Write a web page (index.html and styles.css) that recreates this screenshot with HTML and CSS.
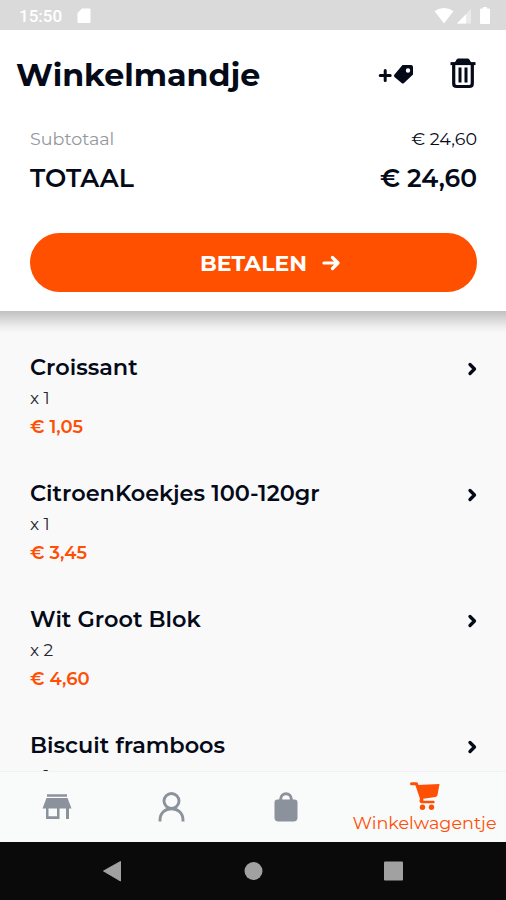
FILE: index.html
```html
<!DOCTYPE html>
<html lang="nl">
<head>
  <meta charset="UTF-8" />
  <meta name="viewport" content="width=device-width, initial-scale=1.0" />
  <title>Winkelmandje</title>
  <link rel="stylesheet" href="styles.css">
</head>
<body>
  <div class="status-bar">
    <span class="clock">15:50</span>
    <svg class="sd-card" width="14" height="16" viewBox="0 0 14 16"><path d="M5 0.5H12.5Q13.5 0.5 13.5 1.5V14Q13.5 15 12.5 15H1.5Q0.5 15 0.5 14V5Z" fill="#fff"/></svg>
    <div class="status-icons">
      <svg width="20" height="16" viewBox="0 0 20 16"><path d="M0.500 3Q10 -3 19.500 3L10 15.500Z" fill="#fff"/></svg>
      <svg width="14" height="16" viewBox="0 0 14 16"><path d="M14 1V15.500H0Z" fill="#ebebeb"/><path d="M9 6.200V15.500H0Z" fill="#fff"/></svg>
      <svg class="battery" width="10" height="17" viewBox="0 0 10 17"><path d="M3 0H7V1.500H9Q10 1.500 10 2.500V16Q10 17 9 17H1Q0 17 0 16V2.500Q0 1.500 1 1.500H3Z" fill="#fff"/></svg>
    </div>
  </div>

  <header class="summary">
    <div class="title-row">
      <h1>Winkelmandje</h1>
      <svg class="tag-icon" width="36" height="22" viewBox="0 0 36 22">
        <path d="M7.200 6.500V16.500M2.200 11.500H12.200" stroke="#050a19" stroke-width="3" stroke-linecap="round"/>
        <path d="M24.500 1H33Q35 1 35 3V10.500L26 19Q24.800 20.100 23.600 19L16.500 13Q15.300 11.800 16.500 10.600ZM30 4.300A2.200 2.200 0 1 0 30 8.700A2.200 2.200 0 1 0 30 4.300Z" fill="#050a19"/>
      </svg>
      <svg class="trash-icon" width="26" height="31" viewBox="0 0 26 31" fill="none" stroke="#050a19">
        <path d="M0.500 5.600H25.500" stroke-width="3"/>
        <path d="M5 5L7.500 1H18.500L21 5Z" fill="#050a19" stroke-width="1"/>
        <path d="M3.700 6V25.500Q3.700 28.500 6.700 28.500H19.300Q22.300 28.500 22.300 25.500V6" stroke-width="3.200"/>
        <path d="M10 9.500V24.500M16 9.500V24.500" stroke-width="3"/>
      </svg>
    </div>
    <div class="subtotal"><span class="muted">Subtotaal</span><span class="amount">€ 24,60</span></div>
    <div class="total"><span class="label">TOTAAL</span><span class="amount">€ 24,60</span></div>
    <button class="pay">
      <span>BETALEN</span>
      <svg width="18" height="16" viewBox="0 0 18 16" fill="none" stroke="#fff" stroke-width="3.200" stroke-linecap="round" stroke-linejoin="round"><path d="M2 8H16M10.500 2.500L16 8L10.500 13.500"/></svg>
    </button>
  </header>

  <main class="items" id="items"></main>

  <nav class="tabs">
    <a class="tab">
      <svg width="30" height="26" viewBox="0 0 30 26" fill="#8b929c"><path d="M5 0.300H25V2.800H5ZM4.500 4H25.500L29.500 14.500H27V25H24V14.500H17.500V25H4V14.500H0.500ZM6.500 14.500V22.300H15V14.500Z" fill-rule="evenodd"/></svg>
    </a>
    <a class="tab">
      <svg width="28" height="30" viewBox="0 0 28 30" fill="none" stroke="#8b929c" stroke-width="2.900"><circle cx="14.500" cy="9" r="7.500"/><path d="M3 29.500V28C3 21 8 16.700 14.500 16.700S26 21 26 28V29.500"/></svg>
    </a>
    <a class="tab">
      <svg width="24" height="30" viewBox="0 0 24 30"><path d="M6.700 9V7A5.300 5.300 0 0 1 17.300 7V9" fill="none" stroke="#8b929c" stroke-width="3"/><path d="M3.500 7.500H20.500Q23.500 7.500 23.500 10.500V25.500Q23.500 29.500 19.500 29.500H4.500Q0.500 29.500 0.500 25.500V10.500Q0.500 7.500 3.500 7.500Z" fill="#8b929c"/></svg>
    </a>
    <a class="tab active">
      <svg width="30" height="28" viewBox="0 0 30 28" fill="#ff4f05"><path d="M1.500 1.800H6.500L12 18" fill="none" stroke="#ff4f05" stroke-width="3" stroke-linecap="round" stroke-linejoin="round"/><path d="M7.500 3L29.500 2L27.500 13Q27.200 14.700 25.500 15L11.500 17Z"/><path d="M12 14.500L10.700 18.500Q10.500 20 12 20H23.500" fill="none" stroke="#ff4f05" stroke-width="2.400" stroke-linecap="round"/><circle cx="12.500" cy="25.200" r="2.700"/><circle cx="21.500" cy="25.200" r="2.700"/></svg>
      <span>Winkelwagentje</span>
    </a>
  </nav>

  <div class="system-nav">
    <svg width="506" height="58" viewBox="0 0 506 58" fill="#a1a1a1"><path d="M103.500 29L120.500 19.500V39Z" stroke="#a1a1a1" stroke-linejoin="round"/><circle cx="253.500" cy="29" r="9"/><rect x="384" y="19.500" width="19" height="19" rx="1"/></svg>
  </div>

  <script>
    const items = [
      { name: 'Croissant', qty: 1, price: '1,05' },
      { name: 'CitroenKoekjes 100-120gr', qty: 1, price: '3,45' },
      { name: 'Wit Groot Blok', qty: 2, price: '4,60' },
      { name: 'Biscuit framboos', qty: 1 },
    ];

    const list = document.getElementById('items');
    items.forEach(item => {
      const row = document.createElement('div');
      row.className = 'item';
      row.innerHTML = `
        <div class="item-head">
          <h2>${item.name}</h2>
          <svg width="10" height="14" viewBox="0 0 10 14" fill="none" stroke="#050a19" stroke-width="3.300" stroke-linecap="round" stroke-linejoin="round"><path d="M3 2.500L7.500 7L3 11.500"/></svg>
        </div>
        <div class="qty">x ${item.qty}</div>
        ${item.price ? `<div class="price">€ ${item.price}</div>` : ''}
      `;
      list.appendChild(row);
    });
  </script>
</body>
</html>
```
FILE: styles.css
```css
* {
  box-sizing: border-box;
}

body {
  font-family: Montserrat, Inter, sans-serif;
  margin: 0;
  height: 900px;
  display: flex;
  flex-direction: column;
  overflow: hidden;
  background-color: #f9f9f9;
  color: #050a19;
}

h1, h2 {
  margin: 0;
  white-space: nowrap;
}

svg {
  display: block;
  flex: none;
}

.status-bar {
  height: 30px;
  flex: none;
  display: flex;
  align-items: center;
  padding: 1px 16px 0 19px;
  background-color: #dadada;
}

.clock {
  font-family: Roboto, sans-serif;
  font-size: 17px;
  font-weight: 500;
  color: #fff;
}

.sd-card {
  margin-left: 15px;
}

.status-icons {
  display: flex;
  align-items: center;
  gap: 3px;
  margin-left: auto;
}

.battery {
  margin-left: 6px;
}

.summary {
  height: 281px;
  flex: none;
  position: relative;
  background-color: #fff;
}

/* drop shadow over the list */
.summary::after {
  content: "";
  position: absolute;
  top: 100%;
  left: 0;
  right: 0;
  height: 22px;
  background: linear-gradient(#c0c0c0, #d6d6d6 35%, #efefef 75%, #f9f9f9);
}

.title-row {
  height: 89px;
  display: flex;
  align-items: center;
  padding: 0 30px 0 16px;
}

h1 {
  font-size: 31.7px;
  font-weight: 700;
}

.tag-icon {
  margin-left: auto;
}

.trash-icon {
  margin: -3px 0 0 36px;
}

.subtotal, .total {
  display: flex;
  align-items: center;
  justify-content: space-between;
  padding: 0 29px 0 30px;
}

.subtotal {
  height: 38px;
  font-size: 17.5px;
}

.muted {
  color: #94979e;
}

.total {
  height: 41px;
  font-size: 25px;
  font-weight: 600;
}

.total .label {
  font-size: 25.3px;
}

.pay {
  width: 447px;
  height: 59px;
  margin: 35px 0 0 30px;
  display: flex;
  align-items: center;
  justify-content: center;
  gap: 15px;
  padding: 0 0 0 33px;
  border: none;
  border-radius: 30px;
  background-color: #ff5000;
  color: #fff;
  font-family: inherit;
  font-size: 22px;
  font-weight: 700;
}

.pay span {
  padding-top: 2px;
}

.items {
  flex: 1;
  overflow: hidden;
  padding: 40px 29px 0 30px;
}

.item {
  height: 126px;
}

.item-head {
  height: 34px;
  display: flex;
  align-items: center;
  justify-content: space-between;
}

.item-head svg {
  margin-top: 2px;
}

h2 {
  margin-top: -2px;
  font-size: 22.4px;
  font-weight: 600;
}

.qty {
  font-size: 17px;
  line-height: 26px;
  color: #23262f;
}

.price {
  font-size: 18px;
  font-weight: 600;
  line-height: 32px;
  color: #ff4f05;
}

.tabs {
  height: 71px;
  flex: none;
  display: grid;
  grid-template-columns: 1fr 1fr 1fr 163px;
  border-top: 1px solid #f0f1f2;
  background-color: #f9fafa;
}

.tab {
  display: flex;
  flex-direction: column;
  align-items: center;
  justify-content: center;
}

.active {
  padding-top: 3px;
  color: #ff4f05;
  font-size: 17.6px;
  line-height: 25px;
}

.system-nav {
  height: 58px;
  flex: none;
  background-color: #0a0a0a;
}
```
